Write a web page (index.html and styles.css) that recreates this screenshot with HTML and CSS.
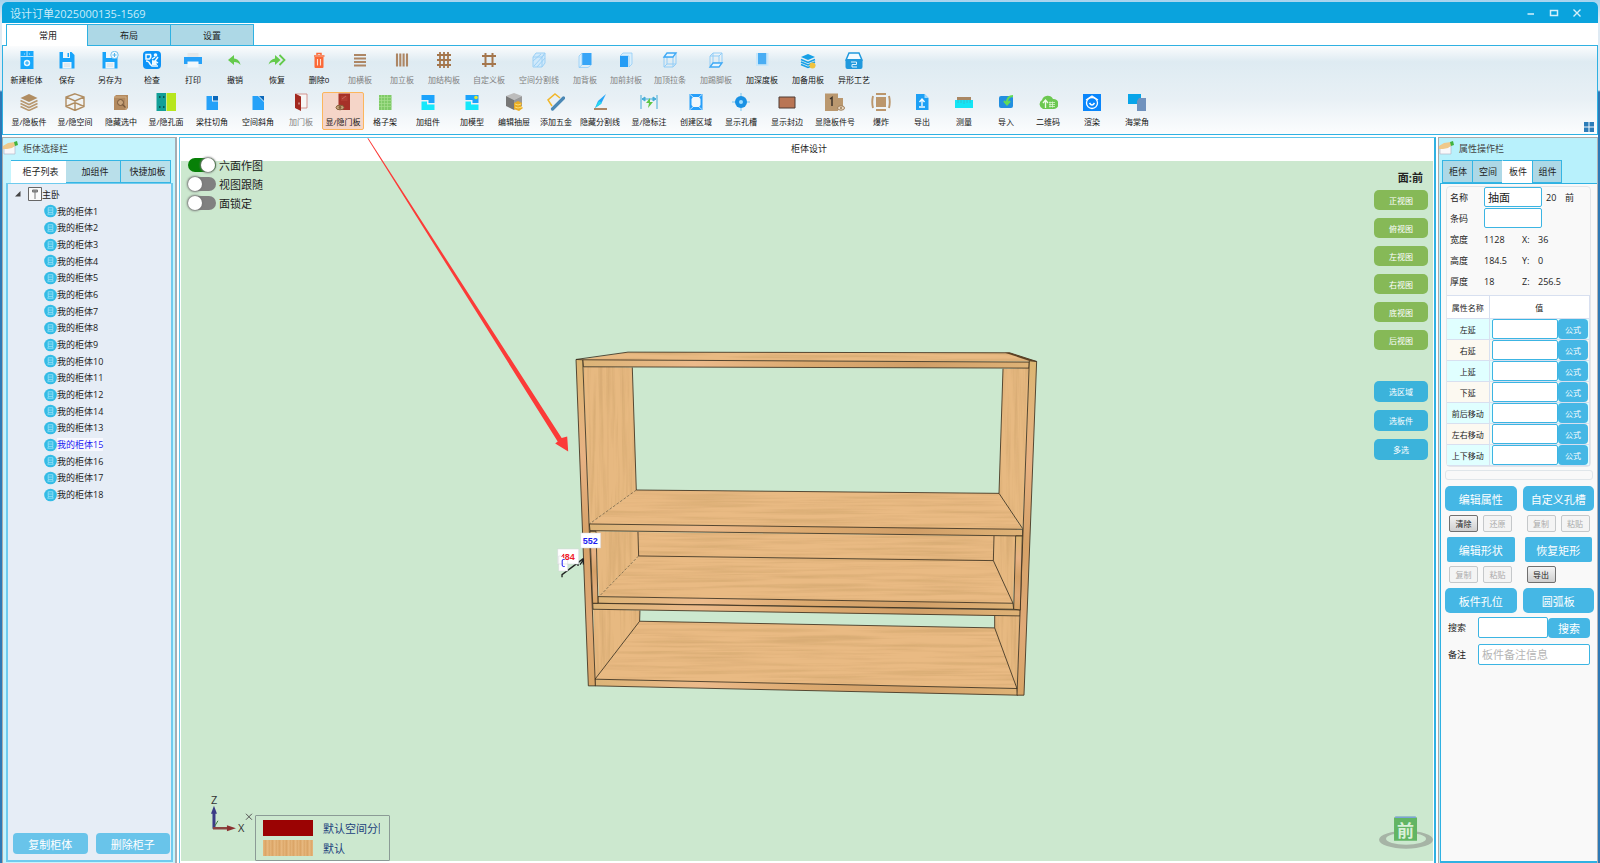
FILE: index.html
```html
<!DOCTYPE html>
<html lang="zh-CN">
<head>
    <meta charset="UTF-8">
    <meta name="viewport" content="width=device-width, initial-scale=1.0">
    <title>设计订单2025000135-1569</title>
    <link rel="stylesheet" href="styles.css">
</head>
<body>
    <svg class="defs" aria-hidden="true">
        <symbol id="cabinet" viewBox="0 0 14 14">
            <circle cx="7" cy="7" r="6.800" fill="#34bce6"/>
            <path d="M4.500 3.500h5v5h-5zM4.500 6h5M4 10.500l1-2M10 10.500l-1-2M4 10.500h6" fill="none" stroke="#a5e5f8" stroke-width=".8"/>
        </symbol>
        <symbol id="hand" viewBox="0 0 16 14">
            <path d="M1 5h11v8H1z" fill="#f8f8fb" stroke="#b5b8c8" stroke-width=".7"/>
            <path d="M0 5l5-3 7-1 1 3-4 3-5 1-4 0z" fill="#efc98b"/>
            <path d="M11 1l3-1 1 4-3 1z" fill="#3fb33f"/>
        </symbol>
    </svg>

    <div class="window">
        <header class="title-bar">
            <span class="title">设计订单2025000135-1569</span>
            <div class="window-controls">
                <button type="button" aria-label="最小化"><svg viewBox="0 0 10 10"><path d="M1.500 6h6.500" stroke="#d5f0fb" stroke-width="1.300"/></svg></button>
                <button type="button" aria-label="最大化"><svg viewBox="0 0 10 10"><path d="M1.500 2.500h7v5h-7z" fill="none" stroke="#d5f0fb" stroke-width="1.500"/></svg></button>
                <button type="button" aria-label="关闭"><svg viewBox="0 0 10 10"><path d="M1.500 1.500l7 7M8.500 1.500l-7 7" stroke="#d5f0fb" stroke-width="1.400"/></svg></button>
            </div>
        </header>

        <nav class="menu-tabs">
            <button type="button" class="active">常用</button>
            <button type="button">布局</button>
            <button type="button">设置</button>
        </nav>

        <section class="ribbon">
            <!-- 第一行工具 -->
            <div class="tools tools-first">
                <button type="button" class="tool"><svg viewBox="0 0 18 18"><path d="M2.500 0h13v18h-13z" fill="#18a8fb"/><path d="M2.500 5.500h13M9 0v5.500M6 3h1M11 3h1" stroke="#d9f2ff" stroke-width=".8"/><circle cx="9" cy="12" r="3.200" fill="#e9f7ff"/><path d="M9 10v4M7 12h4" stroke="#18a8fb"/></svg><span>新建柜体</span></button>
                <button type="button" class="tool"><svg viewBox="0 0 18 18"><path d="M1.500 1h12l3 3v13.500h-15z" fill="#18a4fa"/><path d="M5 1h7v6H5zM4.500 11h9v6.500h-9z" fill="#eef6fb"/><path d="M9.500 2h1.500v4H9.500z" fill="#18a4fa"/><path d="M6 13h6M6 15h6" stroke="#c7d8e2" stroke-width=".8"/></svg><span>保存</span></button>
                <button type="button" class="tool"><svg viewBox="0 0 18 18"><path d="M1.500 1h12l3 3v13.500h-15z" fill="#18a4fa"/><path d="M5 1h7v6H5zM4.500 11h9v6.500h-9z" fill="#eef6fb"/><path d="M6 13h6M6 15h6" stroke="#c7d8e2" stroke-width=".8"/><circle cx="13.500" cy="4" r="3.700" fill="#f3fbff" stroke="#56b5ea" stroke-width=".8"/><path d="M13.500 2v4M11.500 4h4" stroke="#56b5ea"/></svg><span>另存为</span></button>
                <button type="button" class="tool"><svg viewBox="0 0 18 18"><rect width="18" height="18" rx="4" fill="#0d93f7"/><path d="M3 3.500h4.500q1 2.500-1 4.500H3zM3 10q3 0 4 3l2 2h6M15 6l-3 4 3 2M9 8l3-2" fill="none" stroke="#effaff" stroke-width="1.500"/><circle cx="12.500" cy="4" r="1.800" fill="#effaff"/><path d="M9 9l4 1 1 4H9z" fill="#effaff"/></svg><span>检查</span></button>
                <button type="button" class="tool"><svg viewBox="0 0 18 18"><path d="M3.500 2h11v4h-11z" fill="#e4e8ea"/><path d="M0 6h18v7H0z" fill="#26a1f8"/><path d="M3.500 10.500h11v6h-11z" fill="#f2f8fb"/></svg><span>打印</span></button>
                <button type="button" class="tool"><svg viewBox="0 0 18 18"><path d="M2 9l6-5v3.500c4 .5 6 3 6.500 6.500-1.500-2-3.500-3-6.500-3V14z" fill="#64ca4c"/></svg><span>撤销</span></button>
                <button type="button" class="tool"><svg viewBox="0 0 18 18"><path d="M12.500 9L7 4v3.500C3.500 8 1.500 10 .5 13.500c2-2 3.500-2.500 6.500-2.500v3z" fill="#64ca4c"/><path d="M11.500 4L16.500 9l-5 5" fill="none" stroke="#64ca4c" stroke-width="1.800"/></svg><span>恢复</span></button>
                <button type="button" class="tool"><svg viewBox="0 0 18 18"><path d="M4.500 6h9V16a1 1 0 0 1-1 1h-7a1 1 0 0 1-1-1z" fill="#fb6937"/><path d="M4 5h10.500M7 4V2.500h4V4" fill="none" stroke="#fb6937" stroke-width="1.500"/><path d="M7.500 8v6.500M10.500 8v6.500" stroke="#ffe0d0" stroke-width="1.100"/></svg><span>删除0</span></button>
                <button type="button" class="tool" disabled><svg viewBox="0 0 18 18"><path d="M3 4h12M3 7.500h12M3 11h12M3 14.500h12" stroke="#ad8664" stroke-width="1.900"/></svg><span>加横板</span></button>
                <button type="button" class="tool" disabled><svg viewBox="0 0 18 18"><path d="M4 2.500v13M7.300 2.500v13M10.600 2.500v13M14 2.500v13" stroke="#ad8664" stroke-width="2.100"/></svg><span>加立板</span></button>
                <button type="button" class="tool" disabled><svg viewBox="0 0 18 18"><path d="M2 4h14M2 9h14M2 14h14M5 1v16M9 1v16M13 1v16" stroke="#a4764c" stroke-width="1.800"/></svg><span>加结构板</span></button>
                <button type="button" class="tool" disabled><svg viewBox="0 0 18 18"><path d="M2 5h14M2 13h14M5.500 2v14M12.500 2v14" stroke="#a4764c" stroke-width="2"/></svg><span>自定义板</span></button>
                <button type="button" class="tool" disabled><svg viewBox="0 0 18 18"><path d="M3 6l3-4h9v10l-3 4H3z" fill="#cfe9fb" stroke="#9bd0f5"/><path d="M3 6h9v10M12 6l3-4M4 15L14 4M3 10l8-7M7 16l8-9" stroke="#9bd0f5" fill="none"/></svg><span>空间分割线</span></button>
                <button type="button" class="tool" disabled><svg viewBox="0 0 18 18"><path d="M6 2h9.500v12H6z" fill="#37a5f7"/><path d="M3 5l3-3v12l-3 2.500zM3 16.500h9l3-2.500" fill="#d9effc" stroke="#92cdf7" stroke-width=".8"/></svg><span>加背板</span></button>
                <button type="button" class="tool" disabled><svg viewBox="0 0 18 18"><path d="M6 2h9v11l-3 3V5H3z" fill="#d9effc" stroke="#92cdf7" stroke-width=".8"/><path d="M3 5h8v11H3z" fill="#249cf5"/></svg><span>加前封板</span></button>
                <button type="button" class="tool" disabled><svg viewBox="0 0 18 18"><path d="M3 6h9v10H3zM6 2v11h9V2M12 16l3-3M3 16l3-3" fill="none" stroke="#92cdf7"/><path d="M3 6l3-4h9l-3 4z" fill="#e5f5ff" stroke="#3fa9f5" stroke-width="1.300"/></svg><span>加顶拉条</span></button>
                <button type="button" class="tool" disabled><svg viewBox="0 0 18 18"><path d="M3 5h9v10H3zM6 2h9v10H6zM3 5l3-3M12 5l3-3" fill="none" stroke="#92cdf7"/><path d="M3 16l3-4h9l-3 4z" fill="#e5f5ff" stroke="#3fa9f5" stroke-width="1.300"/></svg><span>加踢脚板</span></button>
                <button type="button" class="tool"><svg viewBox="0 0 18 18"><path d="M5 2h8.500v11.500H5z" fill="#49adf3"/><path d="M3 2h2v11l-2 2zM13.500 2h2v13l-2-2zM3 15l2-1.500h8.500l2 1.500z" fill="#c8e7fa"/></svg><span>加深度板</span></button>
                <button type="button" class="tool"><svg viewBox="0 0 18 18"><path d="M9 3l7 3-7 3-7-3z" fill="#16a0e6"/><path d="M2 8.500l7 3 7-3M2 11l7 3 7-3M2 13.500l7 3 7-3" fill="none" stroke="#16a0e6" stroke-width="1.600"/><circle cx="13.500" cy="14.500" r="3" fill="#f0c33e"/></svg><span>加备用板</span></button>
                <button type="button" class="tool"><svg viewBox="0 0 18 18"><path d="M4 2h10l3 7H1z" fill="#f2faff" stroke="#2099dd" stroke-width="1.500"/><rect x=".5" y="8" width="17" height="10" rx="2" fill="#2099dd"/><path d="M6 11h5.500v2.500H7V16h5" fill="none" stroke="#dff3ff"/></svg><span>异形工艺</span></button>
            </div>

            <!-- 第二行工具 -->
            <div class="tools tools-second">
                <button type="button" class="tool"><svg viewBox="0 0 18 18"><path d="M9 1l8.500 4L9 9 .5 5z" fill="#b08d62"/><path d="M.5 7.500l8.500 4 8.500-4M.5 10.500l8.500 4 8.500-4M.5 13.500l8.500 4 8.500-4" fill="none" stroke="#b89870" stroke-width="1.600"/></svg><span>显/隐板件</span></button>
                <button type="button" class="tool"><svg class="wide" viewBox="0 0 20 18"><path d="M10 .8L19 4v9.500l-9 4-9-4V4zM1 4l9 4 9-4M10 8v9.500M1 13.500l9-4 9 4" fill="#f6f3ef" fill-opacity=".5" stroke="#b08d62" stroke-width="1.400"/></svg><span>显/隐空间</span></button>
                <button type="button" class="tool"><svg viewBox="0 0 18 18"><path d="M2 4l2-2h12v13l-2 2H2z" fill="#b38a5f"/><path d="M2 4h12v13" fill="none" stroke="#d0ad84"/><circle cx="8.500" cy="9.500" r="3" fill="#c9a47b" stroke="#77573a"/><path d="M10.500 11.500l3 3" stroke="#77573a" stroke-width="1.300"/></svg><span>隐藏选中</span></button>
                <button type="button" class="tool"><svg class="wide" viewBox="0 0 20 18"><path d="M.5 0H10v18H.5z" fill="#129f98"/><path d="M10.500 0H20v18h-9.500z" fill="#b7e61e"/><path d="M3 4h1.500M7 4h1.500M3 14h1.500M7 14h1.500" stroke="#063f3d" stroke-width="1.500"/></svg><span>显/隐孔面</span></button>
                <button type="button" class="tool"><svg viewBox="0 0 18 18"><path d="M3.500 3H9v5.500h6V17H3.500z" fill="#26a1f8"/><path d="M10 3h5v4.500h-5z" fill="#0b68ba"/></svg><span>梁柱切角</span></button>
                <button type="button" class="tool"><svg viewBox="0 0 18 18"><path d="M3.500 3H9l6 6v8H3.500z" fill="#26a1f8"/><path d="M10 3h5v5z" fill="#0b68ba"/></svg><span>空间斜角</span></button>
                <button type="button" class="tool" disabled><svg viewBox="0 0 18 18"><path d="M4 1h11v14H4z" fill="#f6f6f6" stroke="#c96e66" stroke-width=".7"/><path d="M3 .5l6 3V18l-6-3z" fill="#a3281f"/><path d="M7 9.500v2" stroke="#fff" stroke-width=".8"/></svg><span>加门板</span></button>
                <button type="button" class="tool selected"><svg viewBox="0 0 18 18"><path d="M4.500.5h11.500v16.500H4.500z" fill="#a63128"/><path d="M7 3h6.500v5H7z" fill="#b03b31"/><path d="M8 6l4-3" stroke="#d27a70" stroke-width=".7"/><ellipse cx="6" cy="14.500" rx="4" ry="2.300" fill="#c9a57c" stroke="#84623c"/><circle cx="6" cy="14.500" r="1.400" fill="#84623c"/></svg><span>显/隐门板</span></button>
                <button type="button" class="tool"><svg viewBox="0 0 18 18"><path d="M3 2h12.500v15H3z" fill="#80cb68"/><path d="M3 4.500h12.500M3 7.500h12.500M3 10.500h12.500M3 13.500h12.500M5.500 2v15M8.500 2v15M11.500 2v15" stroke="#a6e08f" stroke-width=".7"/></svg><span>格子架</span></button>
                <button type="button" class="tool"><svg viewBox="0 0 18 18"><path d="M2.500 2h13v8H9.500V7h-7z" fill="#1ca3fc"/><path d="M2.500 8.500H8v3h7.500V17h-13z" fill="#15e8fb"/></svg><span>加组件</span></button>
                <button type="button" class="tool"><svg viewBox="0 0 18 18"><path d="M2.500 2h13v8H9.500V7h-7z" fill="#1ca3fc"/><path d="M2.500 8.500H8v3h7.500V17h-13z" fill="#15e8fb"/><circle cx="13" cy="4.500" r="1.800" fill="#e7e629"/></svg><span>加模型</span></button>
                <button type="button" class="tool"><svg viewBox="0 0 18 18"><path d="M9 0l8 3-8 4-8-4z" fill="#bcbcbc"/><path d="M1 3l8 4v10l-8-4z" fill="#777"/><path d="M9 7l8-4v10l-8 4z" fill="#999"/><path d="M9 10l4-2 4 2-1 3 2 2-4 3-5-2z" fill="#e9ad25"/><path d="M10 11l3 1 3-1M10 14l3 1 4-1" stroke="#fbdc76" fill="none"/></svg><span>编辑抽屉</span></button>
                <button type="button" class="tool"><svg viewBox="0 0 18 18"><path d="M5 13L1 7l7-6 5 4" fill="none" stroke="#f2b72a" stroke-width="1.500"/><path d="M16.500 5L5.500 16" stroke="#4b88b5" stroke-width="3.200" stroke-linecap="round"/></svg><span>添加五金</span></button>
                <button type="button" class="tool"><svg viewBox="0 0 18 18"><path d="M15 1L7 8l-3 7 6-4z" fill="#26a5f8"/><path d="M8 8l3 2-7 5z" fill="#27dced"/><path d="M3 16h13" stroke="#ad8664" stroke-width="2"/></svg><span>隐藏分割线</span></button>
                <button type="button" class="tool"><svg viewBox="0 0 18 18"><path d="M1 2v14M17 2v14M2 6h14M2 6l3-2v4zM16 6l-3-2v4z" fill="#45acd8" stroke="#45acd8"/><path d="M10 5l-4 5h3l-1 5 5-6h-3z" fill="#5ec645"/></svg><span>显/隐标注</span></button>
                <button type="button" class="tool"><svg viewBox="0 0 18 18"><path d="M2.500 1h13v16h-13z" fill="#279ffa"/><path d="M6 4h6l1.500 2v6L12 14H6l-1.500-2V6z" fill="#f1f7fb"/><path d="M3 1.500L6 4M15 1.500L12 4M3 16.500L6 14M15 16.500L12 14" stroke="#b8dffc"/></svg><span>创建区域</span></button>
                <button type="button" class="tool"><svg viewBox="0 0 18 18"><path d="M9 0v18M0 9h18" stroke="#75c5f0"/><circle cx="9" cy="9" r="6" fill="#1991e4"/><circle cx="9" cy="9" r="2" fill="#9ddcff"/></svg><span>显示孔槽</span></button>
                <button type="button" class="tool"><svg viewBox="0 0 18 18"><path d="M1 4h16v11H1z" fill="#b97554" stroke="#4e3d35"/></svg><span>显示封边</span></button>
                <button type="button" class="tool"><svg class="wide" viewBox="0 0 20 18"><path d="M0 .5h13V18H0zM13 5h5v11h-5z" fill="#ba986f"/><path d="M5 6l2-1.500V13" fill="none" stroke="#3d332a" stroke-width="1.500"/><ellipse cx="16" cy="15" rx="3.500" ry="2.200" fill="#ead9c3" stroke="#9b7b56"/><circle cx="16" cy="15" r="1" fill="#9b7b56"/></svg><span>显隐板件号</span></button>
                <button type="button" class="tool"><svg class="wide" viewBox="0 0 20 18"><path d="M5 4h10v10H5z" fill="#bb966c"/><path d="M5 1h10M5 17h10" stroke="#bb966c" stroke-width="1.900"/><path d="M2 3q-1.500 6 0 12M18 3q1.500 6 0 12" fill="none" stroke="#bb966c" stroke-width="1.900"/></svg><span>爆炸</span></button>
                <button type="button" class="tool"><svg viewBox="0 0 18 18"><path d="M3 1h8.500l4 4v12H3z" fill="#1da0f5"/><path d="M11.500 1v4h4z" fill="#a4d9fa"/><path d="M9 13V7M6.500 9L9 6l2.500 3M6 14h6" fill="none" stroke="#f1faff" stroke-width="1.400"/></svg><span>导出</span></button>
                <button type="button" class="tool"><svg viewBox="0 0 18 18"><path d="M2 4h14v4H2z" fill="#a98763"/><path d="M0 7h18v8H0z" fill="#13e5f5"/><path d="M3 7v3M6 7v3M9 7v4M12 7v3M15 7v3" stroke="#35b8c9" stroke-width=".8"/></svg><span>测量</span></button>
                <button type="button" class="tool"><svg viewBox="0 0 18 18"><rect x="2" y="3" width="14" height="12" rx="2" fill="#228fe0"/><path d="M16 3c-4 0-6 2-6 7M7 8l3 3.500 3-3.500" fill="none" stroke="#62db58" stroke-width="2"/></svg><span>导入</span></button>
                <button type="button" class="tool"><svg class="wide" viewBox="0 0 20 18"><path d="M5 16a5 5 0 0 1-1-9 6 6 0 0 1 11-1 5 5 0 0 1 1 10z" fill="#6cc851"/><path d="M7.500 15V8M5 10l2.500-3L10 10" fill="none" stroke="#eefbe9" stroke-width="1.300"/><path d="M11 9.500h6M11 11.500h6M11 13.500h6M12 8.500v6M14.500 8.500v6" stroke="#d8f3ce" stroke-width=".8"/></svg><span>二维码</span></button>
                <button type="button" class="tool"><svg viewBox="0 0 18 18"><path d="M0 1h18v17H0z" fill="#0a86fb"/><circle cx="9" cy="10" r="5.500" fill="none" stroke="#fff" stroke-width="1.300"/><path d="M3 7l6-4 6 4" fill="none" stroke="#fff" stroke-width="1.200"/><path d="M6.500 10q2.500 4 5 0" fill="none" stroke="#fff" stroke-width="1.500"/></svg><span>渲染</span></button>
                <button type="button" class="tool"><svg viewBox="0 0 18 18"><path d="M0 1h13v10H0z" fill="#08a5e9"/><path d="M11 5h7v13H9V8z" fill="#7092be"/></svg><span>海棠角</span></button>
            </div>

            <button type="button" class="ribbon-layout" aria-label="布局"><svg viewBox="0 0 10 10"><path d="M0 0h4.500v4.500H0zM5.500 0H10v4.500H5.500zM0 5.500h4.500V10H0zM5.500 5.500H10V10H5.500z" fill="#2c7db9"/></svg></button>
        </section>

        <main class="workspace">
            <!-- 左侧柜体列表 -->
            <aside class="panel panel-left">
                <h2 class="panel-title"><svg><use href="#hand"/></svg>柜体选择栏</h2>
                <div class="panel-tabs tabs-left">
                    <button type="button" class="active">柜子列表</button>
                    <button type="button">加组件</button>
                    <button type="button">快捷加板</button>
                </div>
                <div class="panel-page page-left">
                    <div class="tree-root">
                        <svg class="arrow" viewBox="0 0 6 6"><path d="M5.500 0v5.500H0z" fill="#444"/></svg>
                        <svg class="room" viewBox="0 0 14 14"><path d="M.5.5h13v13H.5z" fill="#fafafa" stroke="#666"/><path d="M7 4v8M4.500 3h5v2h-5z" stroke="#777" fill="#999"/></svg>
                        <span>主卧</span>
                    </div>
                    <ul class="tree">
                        <li><svg><use href="#cabinet"/></svg><a href="#">我的柜体1</a></li>
                        <li><svg><use href="#cabinet"/></svg><a href="#">我的柜体2</a></li>
                        <li><svg><use href="#cabinet"/></svg><a href="#">我的柜体3</a></li>
                        <li><svg><use href="#cabinet"/></svg><a href="#">我的柜体4</a></li>
                        <li><svg><use href="#cabinet"/></svg><a href="#">我的柜体5</a></li>
                        <li><svg><use href="#cabinet"/></svg><a href="#">我的柜体6</a></li>
                        <li><svg><use href="#cabinet"/></svg><a href="#">我的柜体7</a></li>
                        <li><svg><use href="#cabinet"/></svg><a href="#">我的柜体8</a></li>
                        <li><svg><use href="#cabinet"/></svg><a href="#">我的柜体9</a></li>
                        <li><svg><use href="#cabinet"/></svg><a href="#">我的柜体10</a></li>
                        <li><svg><use href="#cabinet"/></svg><a href="#">我的柜体11</a></li>
                        <li><svg><use href="#cabinet"/></svg><a href="#">我的柜体12</a></li>
                        <li><svg><use href="#cabinet"/></svg><a href="#">我的柜体14</a></li>
                        <li><svg><use href="#cabinet"/></svg><a href="#">我的柜体13</a></li>
                        <li><svg><use href="#cabinet"/></svg><a href="#" class="current">我的柜体15</a></li>
                        <li><svg><use href="#cabinet"/></svg><a href="#">我的柜体16</a></li>
                        <li><svg><use href="#cabinet"/></svg><a href="#">我的柜体17</a></li>
                        <li><svg><use href="#cabinet"/></svg><a href="#">我的柜体18</a></li>
                    </ul>
                    <div class="tree-actions">
                        <button type="button">复制柜体</button>
                        <button type="button">删除柜子</button>
                    </div>
                </div>
            </aside>

            <!-- 中间设计区 -->
            <section class="design">
                <h1 class="design-title">柜体设计</h1>
                <div class="viewport">
                    <svg class="scene" viewBox="180 161 1253 700" aria-hidden="true">
                        <defs>
                            <filter id="grain-h" x="0" y="0" width="100%" height="100%">
                                <feTurbulence type="fractalNoise" baseFrequency=".003 .09" numOctaves="3" seed="4"/>
                                <feColorMatrix values="0 0 0 0 .7  0 0 0 0 .42  0 0 0 0 .18  2.6 0 0 0 -1.05"/>
                                <feComposite in2="SourceGraphic" operator="in" result="g"/>
                                <feMerge><feMergeNode in="SourceGraphic"/><feMergeNode in="g"/></feMerge>
                            </filter>
                            <filter id="grain-v" x="0" y="0" width="100%" height="100%">
                                <feTurbulence type="fractalNoise" baseFrequency=".09 .004" numOctaves="3" seed="7"/>
                                <feColorMatrix values="0 0 0 0 .7  0 0 0 0 .42  0 0 0 0 .18  2.6 0 0 0 -1.05"/>
                                <feComposite in2="SourceGraphic" operator="in" result="g"/>
                                <feMerge><feMergeNode in="SourceGraphic"/><feMergeNode in="g"/></feMerge>
                            </filter>
                            <linearGradient id="edge-h">
                                <stop offset="0" stop-color="#dcb477"/><stop offset=".25" stop-color="#ecba8b"/><stop offset=".5" stop-color="#dcaa70"/><stop offset=".75" stop-color="#d19f68"/><stop offset="1" stop-color="#dfb377"/>
                            </linearGradient>
                            <linearGradient id="edge-v" x2="0" y2="1">
                                <stop offset="0" stop-color="#dcb672"/><stop offset=".3" stop-color="#e8b284"/><stop offset=".55" stop-color="#d5a167"/><stop offset=".8" stop-color="#e0aa78"/><stop offset="1" stop-color="#d8a567"/>
                            </linearGradient>
                        </defs>

                        <!-- 柜体 -->
                        <g transform="translate(540 340) scale(.33333)">
                            <g fill="#e9ba83" filter="url(#grain-h)">
                                <path d="M108 60L262 36 1408 38 1488 64z"/>
                                <path d="M287 450L1376 460 1447 568 146 552z"/>
                                <path d="M292 576L1361 588 1359 662 294 648z"/>
                                <path d="M294 648L1359 662 1418 790 175 770z"/>
                                <path d="M297 844L1363 864 1430 1046 163 1018z"/>
                            </g>
                            <g fill="#e7b981" filter="url(#grain-v)">
                                <path d="M128 80L275 82 287 450 146 552z"/>
                                <path d="M1388 86L1466 84 1447 566 1376 460z"/>
                                <path d="M166 574L292 576 294 648 175 770z"/>
                                <path d="M1361 588L1426 588 1418 790 1359 662z"/>
                                <path d="M158 808L298 812 297 844 163 1018z"/>
                                <path d="M1363 828L1438 828 1430 1046 1363 864z"/>
                            </g>
                            <g fill="url(#edge-h)" stroke="#3a2d1c" stroke-width="2.500">
                                <path d="M126 59L1467 66 1466 84 128 80z"/>
                                <path d="M146 552L1447 568 1447 588 148 572z"/>
                                <path d="M172 770L1418 790 1420 808 172 790z"/>
                                <path d="M156 790L1440 810 1440 828 157 808z"/>
                                <path d="M163 1018L1430 1046 1432 1066 163 1038z"/>
                            </g>
                            <g fill="url(#edge-v)" stroke="#3a2d1c" stroke-width="2.500">
                                <path d="M106 58L126 59 164 1038 143 1038z"/>
                                <path d="M1467 62L1489 64 1451 1066 1430 1066z"/>
                                <path d="M148 574L166 574 172 790 156 790z"/>
                                <path d="M1426 588L1446 588 1440 810 1420 808z"/>
                            </g>
                            <g fill="none" stroke="#3a2d1c" stroke-width="2.500">
                                <path d="M106 58L262 36 1408 38 1489 64"/>
                                <path d="M275 82L287 450 1376 460 1388 86M1376 460L1447 566"/>
                                <path d="M292 576L294 648 1359 662 1361 588M1359 662L1418 790"/>
                                <path d="M298 812L297 844 1363 864 1363 828M1363 864L1430 1046M297 844L163 1018"/>
                                <path d="M287 450L146 552M294 648L175 770" stroke-width="1.500" stroke-dasharray="8 5"/>
                            </g>
                            <path d="M1394 38L1408 38 1489 64 1466 62z" fill="#5b4023"/>
                            <path d="M64 712V704L128 656M112 678V668M118 674L128 660V674" fill="none" stroke="#222" stroke-width="4"/>
                        </g>

                        <!-- 尺寸标注 -->
                        <g class="dimension">
                            <path d="M558 556h9v15h-9zM557 549h21v15h-21zM580 533h20v15h-20z" fill="#fff" stroke="#d5d5dd" stroke-width=".5"/>
                            <text x="582" y="544" fill="#1c1cf0">552</text>
                            <text x="564" y="560" fill="#f01c2c">84</text>
                            <path d="M561 557l2-3v4" fill="none" stroke="#f01c2c"/>
                            <path d="M564 559.500h-1.500q-1 0-1 1.500v4q0 1.500 1 1.500h1.500" fill="none" stroke="#1c1cf0"/>
                        </g>

                        <!-- 指示箭头 -->
                        <path d="M366.500 138L367.500 138 561 438 566.500 436.500 567.500 451.500 554.500 443.500 557 441.500z" fill="#fb3b38"/>

                        <!-- 坐标轴 -->
                        <path d="M213 829V813" stroke="#3b3b86" stroke-width="3"/>
                        <path d="M213 806l-3 8h6z" fill="#3b3b86"/>
                        <path d="M212 828.500h16" stroke="#8b4440" stroke-width="2.500"/>
                        <path d="M235 828.500l-9-3v6z" fill="#8b3030"/>
                        <path d="M214 826l3-5" stroke="#3b7a3b"/>
                        <text class="axis" x="210" y="804">Z</text>
                        <text class="axis" x="237" y="832">X</text>
                        <path d="M245 814l6 6M251 814l-6 6" stroke="#555"/>

                        <!-- 视角方块 -->
                        <path fill-rule="evenodd" d="M1379 840a27 9 0 0 1 54 0a27 9 0 0 1-54 0zM1386 839a20 6 0 0 0 40 0a20 6 0 0 0-40 0z" fill="#a6b4a6"/>
                        <path d="M1394 818l2-1h19l2 1v23h-23z" fill="#62b564"/>
                        <path d="M1395 817.500h21" stroke="#7da2d8" stroke-width="1.500"/>
                        <text class="cube" x="1397" y="837">前</text>
                    </svg>

                    <div class="switches">
                        <label><input type="checkbox" checked>六面作图</label>
                        <label><input type="checkbox">视图跟随</label>
                        <label><input type="checkbox">面锁定</label>
                    </div>

                    <div class="views">
                        <strong>面:前</strong>
                        <div class="view-group">
                            <button type="button">正视图</button>
                            <button type="button">俯视图</button>
                            <button type="button">左视图</button>
                            <button type="button">右视图</button>
                            <button type="button">底视图</button>
                            <button type="button">后视图</button>
                        </div>
                        <div class="view-group pick">
                            <button type="button">选区域</button>
                            <button type="button">选板件</button>
                            <button type="button">多选</button>
                        </div>
                    </div>

                    <ul class="legend">
                        <li><i class="red"></i><span>默认空间分隔</span></li>
                        <li><i class="wood"></i><span>默认</span></li>
                    </ul>
                </div>
            </section>

            <!-- 右侧属性栏 -->
            <aside class="panel panel-right">
                <h2 class="panel-title"><svg><use href="#hand"/></svg>属性操作栏</h2>
                <div class="panel-tabs tabs-right">
                    <button type="button">柜体</button>
                    <button type="button">空间</button>
                    <button type="button" class="active">板件</button>
                    <button type="button">组件</button>
                </div>
                <div class="panel-page page-right">
                    <div class="props">
                        <div class="prop"><label for="name">名称</label><input id="name" type="text" value="抽面"><span>20</span><span>前</span></div>
                        <div class="prop"><label for="code">条码</label><input id="code" type="text"></div>
                        <dl class="sizes">
                            <dt>宽度</dt><dd>1128</dd><dt>X:</dt><dd>36</dd>
                            <dt>高度</dt><dd>184.5</dd><dt>Y:</dt><dd>0</dd>
                            <dt>厚度</dt><dd>18</dd><dt>Z:</dt><dd>256.5</dd>
                        </dl>
                        <table class="values">
                            <thead>
                                <tr><th>属性名称</th><th>值</th></tr>
                            </thead>
                            <tbody>
                                <tr><th><label for="v1">左延</label></th><td><div><input id="v1" type="text"><button type="button">公式</button></div></td></tr>
                                <tr><th><label for="v2">右延</label></th><td><div><input id="v2" type="text"><button type="button">公式</button></div></td></tr>
                                <tr><th><label for="v3">上延</label></th><td><div><input id="v3" type="text"><button type="button">公式</button></div></td></tr>
                                <tr><th><label for="v4">下延</label></th><td><div><input id="v4" type="text"><button type="button">公式</button></div></td></tr>
                                <tr><th><label for="v5">前后移动</label></th><td><div><input id="v5" type="text"><button type="button">公式</button></div></td></tr>
                                <tr><th><label for="v6">左右移动</label></th><td><div><input id="v6" type="text"><button type="button">公式</button></div></td></tr>
                                <tr><th><label for="v7">上下移动</label></th><td><div><input id="v7" type="text"><button type="button">公式</button></div></td></tr>
                            </tbody>
                        </table>
                    </div>
                    <div class="group-line"></div>

                    <div class="actions">
                        <div class="action-row">
                            <button type="button" class="main-btn">编辑属性</button>
                            <button type="button" class="main-btn">自定义孔槽</button>
                        </div>
                        <div class="action-row small-row">
                            <div><button type="button">清除</button><button type="button" disabled>还原</button></div>
                            <div><button type="button" disabled>复制</button><button type="button" disabled>粘贴</button></div>
                        </div>
                        <div class="action-row">
                            <button type="button" class="main-btn square">编辑形状</button>
                            <button type="button" class="main-btn square">恢复矩形</button>
                        </div>
                        <div class="action-row small-row">
                            <div><button type="button" disabled>复制</button><button type="button" disabled>粘贴</button></div>
                            <div><button type="button">导出</button></div>
                        </div>
                        <div class="action-row">
                            <button type="button" class="main-btn">板件孔位</button>
                            <button type="button" class="main-btn">圆弧板</button>
                        </div>
                    </div>

                    <div class="search"><label for="search">搜索</label><input id="search" type="text"><button type="button">搜索</button></div>
                    <div class="search"><label for="note">备注</label><input id="note" type="text" placeholder="板件备注信息"></div>
                </div>
            </aside>
        </main>
    </div>
</body>
</html>
```
FILE: styles.css
```css
* {
    box-sizing: border-box;
}

body {
    margin: 0;
    padding: 2px 2px 0;
    min-height: 100vh;
    display: flex;
    font-family: "Open Sans", "Noto Sans CJK SC", sans-serif;
    font-size: 9px;
    color: #222;
    background: linear-gradient(#a5d3ee 0, #dfeaf3 20px, #dfeaf3 90px, #2e78b5 92px, #2e78b5 100%);
}

button, input {
    font-family: inherit;
    font-size: inherit;
    color: inherit;
    margin: 0;
    padding: 0;
}

button {
    cursor: pointer;
    white-space: nowrap;
}

ul, dl, dd, h1, h2 {
    margin: 0;
    padding: 0;
    list-style: none;
}

.defs {
    position: absolute;
    width: 0;
    height: 0;
}

.window {
    flex: 1;
    min-width: 0;
    display: flex;
    flex-direction: column;
    background: #fff;
    border-radius: 5px 5px 0 0;
    overflow: hidden;
}

/* 标题栏 */
.title-bar {
    display: flex;
    align-items: center;
    justify-content: space-between;
    height: 21px;
    padding: 0 16px 0 8px;
    background: #0aa3dd;
    color: #c9ecf9;
    font-size: 11px;
}

.window-controls {
    display: flex;
    gap: 13px;
}

.window-controls button {
    width: 10px;
    height: 10px;
    border: 0;
    background: none;
}

.window-controls svg {
    display: block;
}

/* 顶部选项卡 */
.menu-tabs {
    display: flex;
    height: 22px;
    padding: 1px 0 0 4px;
}

.menu-tabs button {
    width: 83px;
    height: 22px;
    border: 1px solid #2fb1e2;
    border-left-width: 0;
    background: #add8e6;
}

.menu-tabs .active {
    width: 82px;
    padding-left: 2px;
    border-left-width: 1px;
    border-bottom: 0;
    background: #fff;
    position: relative;
    z-index: 1;
}

/* 工具栏 */
.ribbon {
    position: relative;
    padding: 4px 3px;
    border: 1px solid #2fb1e2;
    background: linear-gradient(#fbfcfd 0, #deebf2 18%, #e8f0f5 60%, #fcfdfe 100%);
}

.tools {
    display: grid;
    width: max-content;
}

.tools-first {
    grid-template-columns: 41px 40px 46px 38px 44px 40px 44px 40px 42px 42px 42px 48px 52px 40px 42px 46px 46px 46px 46px 46px;
    margin-bottom: 4px;
}

.tools-second {
    grid-template-columns: 46px 46px 46px 44px 48px 44px 42px 42px 42px 44px 44px 40px 44px 44px 54px 40px 50px 42px 54px 38px 44px 40px 44px 40px 48px 42px;
}

.tool {
    display: flex;
    flex-direction: column;
    align-items: center;
    gap: 4px;
    border: 1px solid transparent;
    border-radius: 2px;
    background: none;
    font-size: 8px;
    line-height: 14px;
    color: #111;
}

.tool svg {
    width: 18px;
    height: 18px;
    flex: none;
}

.tool .wide {
    width: 20px;
}

.tool:disabled {
    color: #808080;
    cursor: default;
}

.tool.selected {
    border-color: #fcb65c;
    background: #f5d5c8;
}

.ribbon-layout {
    position: absolute;
    right: 3px;
    bottom: 2px;
    width: 10px;
    height: 10px;
    border: 0;
    background: none;
}

.ribbon-layout svg {
    display: block;
}

/* 主区域 */
.workspace {
    flex: 1;
    display: grid;
    grid-template-columns: 175px minmax(0, 1fr) 160px;
    gap: 2px;
    padding-top: 2px;
}

.panel {
    display: flex;
    flex-direction: column;
    min-width: 0;
    border: 1px solid #aaa;
    border-bottom: 0;
    background: #c5f4fd;
}

.panel-title {
    display: flex;
    align-items: center;
    height: 22px;
    padding-bottom: 2px;
    font-size: 9px;
    font-weight: normal;
    color: #444;
}

.panel-title svg {
    width: 16px;
    height: 14px;
    margin-right: 4px;
}

.panel-tabs {
    display: flex;
    height: 23px;
}

.panel-tabs button {
    border: 1px solid #35b5e4;
    border-left-width: 0;
    background: #b9dfea;
}

.panel-tabs .active {
    background: #fff;
    border-color: #fff;
    border-top-color: #35b5e4;
    border-right-width: 0;
}

.panel-page {
    flex: 1;
    display: flex;
    flex-direction: column;
    min-width: 0;
}

.panel-left {
    border-right: 2px solid #a5adb3;
}

.tabs-left {
    padding-left: 8px;
}

.tabs-left button {
    flex: 0 0 50px;
    padding-left: 4px;
}

.tabs-left button:nth-child(-n+2) {
    flex-basis: 55px;
}

.page-left {
    margin: 0 2px 1px 3px;
    padding: 2px 4px 6px 7px;
    border: 2px solid #6fcbee;
    border-top-width: 1px;
    background: #e6edf6;
}

.tree-root {
    display: flex;
    align-items: center;
    height: 16px;
    margin-bottom: 1px;
}

.tree-root .arrow {
    width: 6px;
    height: 6px;
    margin-right: 7px;
}

.tree-root .room {
    width: 14px;
    height: 14px;
}

.tree {
    display: grid;
    grid-auto-rows: 1fr;
    height: 300px;
    padding-left: 29px;
}

.tree li {
    display: flex;
    align-items: center;
    line-height: 13px;
}

.tree svg {
    width: 13px;
    height: 14px;
    flex: none;
}

.tree a {
    color: #222;
    text-decoration: none;
}

.tree .current {
    color: #1a1af0;
    background: #f8f9ff;
}

.tree-actions {
    display: flex;
    gap: 8px;
    margin: auto -3px 0 -2px;
}

.tree-actions button {
    flex: 1;
    height: 21px;
    border: 0;
    border-radius: 4px;
    background: #69c4ea;
    color: #fff;
    font-size: 11px;
}

/* 设计区 */
.design {
    display: flex;
    flex-direction: column;
    border: 1px solid #5fc6ec;
    border-width: 1px 2px 0 1px;
    border-right-color: #2fb1e2;
}

.design-title {
    height: 23px;
    padding-left: 4px;
    line-height: 21px;
    text-align: center;
    font-size: 9px;
    font-weight: normal;
}

.viewport {
    flex: 1;
    position: relative;
    margin: 0 1px 2px;
    background: #cce8cf;
}

.scene {
    position: absolute;
    inset: 0;
    width: 100%;
    height: 100%;
    overflow: visible;
    pointer-events: none;
}

.dimension text {
    font: bold 9px "Liberation Sans", sans-serif;
}

.axis {
    font-size: 11px;
    fill: #333;
}

.cube {
    font-size: 17px;
    font-weight: bold;
    fill: #d8f0d8;
}

.switches {
    position: absolute;
    top: -6px;
    left: 7px;
    font-size: 11px;
}

.switches label {
    display: flex;
    align-items: center;
    gap: 3px;
    height: 19px;
}

.switches input {
    appearance: none;
    width: 28px;
    height: 14px;
    border-radius: 7px;
    background: #808080;
}

.switches input::before {
    content: "";
    display: block;
    width: 14px;
    height: 14px;
    border-radius: 50%;
    background: #fff;
    box-shadow: 0 0 2px 1px #777;
}

.switches input:checked {
    background: #078007;
}

.switches input:checked::before {
    margin-left: 13px;
}

.views {
    position: absolute;
    top: 9px;
    right: 5px;
    width: 54px;
    display: flex;
    flex-direction: column;
}

.views strong {
    align-self: flex-end;
    margin: 0 5px 4px 0;
    font-size: 11px;
    line-height: 16px;
}

.view-group {
    display: flex;
    flex-direction: column;
    gap: 8px;
}

.view-group button {
    height: 20px;
    border: 0;
    border-radius: 5px;
    background: #86b957;
    color: #fff;
    font-size: 8px;
}

.view-group.pick {
    margin-top: 31px;
}

.view-group.pick button {
    height: 21px;
    background: #3bb3db;
}

.legend {
    position: absolute;
    left: 74px;
    bottom: 0;
    width: 135px;
    padding: 2px 9px 2px 7px;
    border: 1px solid #8b9b96;
    border-radius: 1px;
    font-size: 11px;
    color: #21417c;
}

.legend li {
    display: flex;
    align-items: center;
    gap: 10px;
    height: 20px;
}

.legend i {
    flex: none;
    width: 50px;
    height: 16px;
}

.legend span {
    overflow: hidden;
    white-space: nowrap;
}

.legend .red {
    background: #9b0303;
}

.legend .wood {
    background: repeating-linear-gradient(90deg, #e6b67c 0, #d9a263 3px, #e9bb83 4px, #dba668 7px);
}

/* 属性栏 */
.panel-right {
    border-right: 1px solid #b5b5b5;
    background: #b8f1fc;
}

.tabs-right {
    padding-left: 3px;
}

.tabs-right button {
    flex: 0 0 30px;
    padding-left: 1px;
    border-left-width: 1px;
    border-right-width: 0;
    background: #add8e6;
}

.tabs-right button:last-child {
    border-right-width: 1px;
}

.page-right {
    margin-left: 1px;
    padding: 2px 3px 0 4px;
    border: solid #2fb1e2;
    border-width: 1px 0 2px 1px;
    background: #f9f9f9;
}

.page-right input {
    min-width: 0;
    padding: 0 3px;
    border: 1px solid #3cb5e3;
    border-radius: 2px;
    background: #fff;
    font-size: 11px;
}

.props {
    margin: 0 3px 0 1px;
    border: 1px solid #e3e6ea;
    border-radius: 4px;
}

.prop {
    display: flex;
    align-items: center;
    height: 20px;
    margin-bottom: 1px;
    padding-left: 3px;
}

.prop label {
    width: 34px;
}

.prop input {
    width: 58px;
    height: 20px;
}

.prop span {
    width: 15px;
    margin-left: 4px;
}

.sizes {
    display: grid;
    grid-template-columns: 34px 38px 16px 1fr;
    padding: 0 0 3px 3px;
    line-height: 21px;
}

.values {
    width: 100%;
    table-layout: fixed;
    border-collapse: collapse;
    font-size: 8px;
    background: #fff;
}

.values th, .values td {
    height: 21px;
    padding: 0;
    border: 1px solid #d8e0f0;
    border-left: 0;
    font-weight: normal;
    text-align: center;
    white-space: nowrap;
}

.values thead th {
    height: 23px;
}

.values th:first-child {
    width: 42px;
}

.values tbody tr {
    background: #fcf9f1;
}

.values tbody tr:nth-child(odd) {
    background: #e0ffff;
}

.values td div {
    display: flex;
    padding: 0 1px 0 2px;
}

.values input {
    flex: 1;
    width: 0;
    height: 20px;
}

.values button {
    width: 30px;
    height: 20px;
    border: 0;
    border-radius: 4px;
    background: #45b7e5;
    color: #fff;
    font-size: 8px;
}

.group-line {
    height: 10px;
    margin: 3px 1px 6px 0;
    border: 1px solid #e0e6ea;
    border-radius: 3px;
}

.actions {
    display: flex;
    flex-direction: column;
    gap: 4px;
    margin-bottom: 4px;
}

.action-row {
    display: grid;
    grid-template-columns: 1fr 1fr;
    gap: 6px;
}

.main-btn {
    height: 25px;
    border: 0;
    border-radius: 5px;
    background: #45b7e5;
    color: #fff;
    font-size: 11px;
}

.main-btn.square {
    margin: 0 2px;
    border-radius: 2px;
}

.small-row {
    height: 18px;
}

.small-row div {
    display: flex;
    gap: 5px;
    padding-left: 4px;
}

.small-row button {
    width: 29px;
    height: 17px;
    border: 1px solid #707070;
    border-radius: 2px;
    background: linear-gradient(#f4f4f4, #cfcfcf);
    font-size: 8px;
}

.small-row button:disabled {
    border-color: #c5c8ca;
    background: #f4f4f4;
    color: #aaa;
}

.search {
    display: flex;
    align-items: center;
    padding: 0 4px 0 3px;
    margin-bottom: 6px;
}

.search label {
    width: 30px;
}

.search input {
    flex: 1;
    height: 21px;
}

.search input::placeholder {
    color: #b5b5b5;
}

.search button {
    width: 42px;
    height: 20px;
    border: 0;
    border-radius: 4px;
    background: #45b7e5;
    color: #fff;
    font-size: 11px;
}
```
